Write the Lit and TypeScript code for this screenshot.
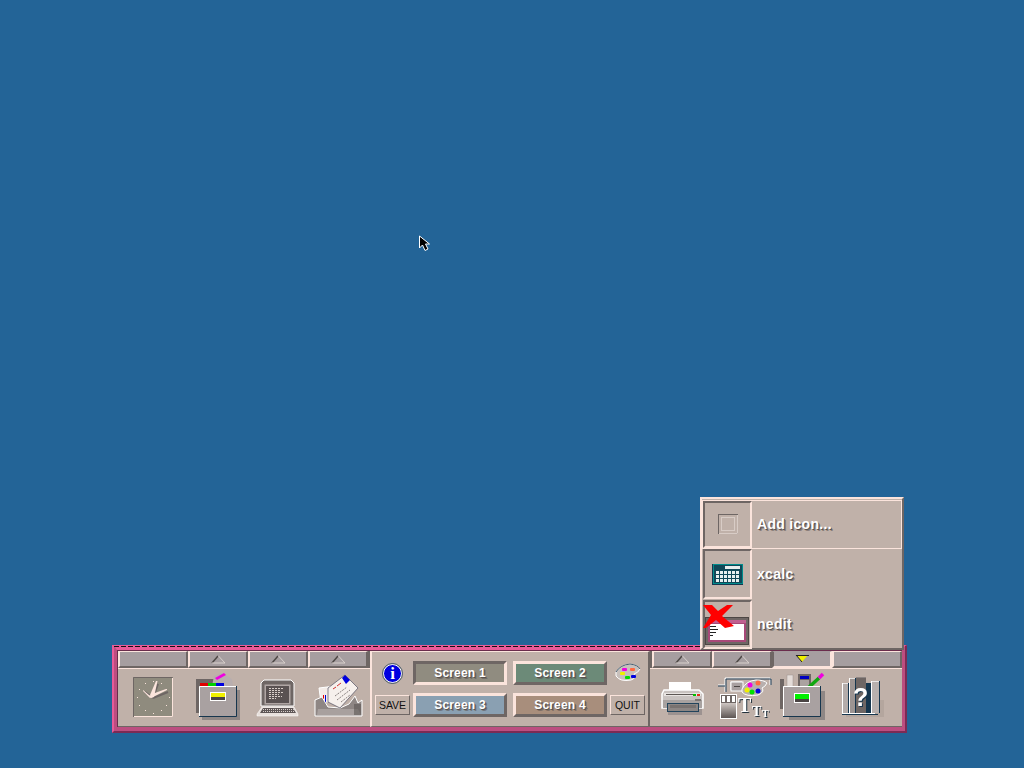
import { LitElement, html, css, svg } from 'lit';
import { customElement } from 'lit/decorators.js';

const LIGHT = '#fbe4dc';
const DARK = '#6e6664';
const OUT = '#16364e';

// viewBox is given in page coordinates, so the shapes below read like the screenshot
const pic = (x: number, y: number, w: number, h: number, body: unknown) => html`
  <svg width=${w} height=${h} viewBox="${x} ${y} ${w} ${h}" style="overflow:visible;display:block">${body}</svg>
`;

const dots = Array.from({ length: 12 }, (_, i) => {
  const a = (i * Math.PI) / 6;
  return svg`<rect x=${Math.round(152.5 + 16 * Math.sin(a))} y=${Math.round(696.5 - 16 * Math.cos(a))} width="1" height="1" fill=${LIGHT} />`;
});

const clock = svg`
  <rect x="133" y="677" width="40" height="40" fill="#8f8b7e" />
  <path d="M133.500 717V677.500H172.500" fill="none" stroke=${DARK} />
  <path d="M134 716.500H172.500V678" fill="none" stroke=${LIGHT} />
  ${dots}
  <path d="M153 698L158 684M153 698L145 692M153 698L168 692" stroke="#6e6664" stroke-width="2" />
  <polygon points="150,695 156,681 157.500,681 154,697 151,698" fill=${LIGHT} />
  <polygon points="149,695 143,690 143,691 150,698 153,697" fill=${LIGHT} />
  <polygon points="152,694 166,689 167,690 153,697" fill=${LIGHT} />
`;

const cabinet = svg`
  <rect x="202" y="690" width="38" height="30" fill="#8f8785" />
  <rect x="196" y="679" width="36" height="34" fill=${DARK} />
  <polygon points="214,676 222,673 232,679 233,686 212,686" fill="#b8aeae" />
  <polygon points="215,678 224,673 226,675 217,680" fill="#f000e0" />
  <rect x="200" y="683" width="8" height="3" fill="#e00000" />
  <rect x="208" y="683" width="8" height="3" fill="#00d000" />
  <rect x="216" y="683" width="8" height="3" fill="#0000e0" />
  <rect x="199" y="686" width="37" height="30" fill="#a9a1a1" />
  <path d="M199.500 716V686.500H236" fill="none" stroke="#fff" />
  <path d="M199 716.500H236.500V686" fill="none" stroke=${OUT} />
  <rect x="210" y="692" width="16" height="9" fill="#fff" />
  <rect x="211" y="693" width="14" height="4" fill="#f0f000" />
  <rect x="211" y="697" width="14" height="3" fill="#4a4444" />
`;

const computer = svg`
  <path d="M261 683L264 680H291L294 683V706H261Z" fill="#6e6664" stroke="#fff" />
  <rect x="264.500" y="684.500" width="26" height="20" fill="#b0a6a4" />
  <rect x="266" y="686" width="23" height="17" fill="#5a5252" />
  ${[688, 690, 692, 694, 696, 698].map(
    (y, i) => svg`<path d="M269 ${y}.5h${[14, 12, 15, 10, 13, 7][i]}" stroke="#d8cec9" stroke-dasharray="2 1" />`,
  )}
  <polygon points="262,707 294,707 298,714 298,716 257,716 257,714" fill="#e8e0dc" stroke="#fff" stroke-width=".5" />
  <polygon points="263,708 293,708 296,713 260,713" fill="#5e5656" />
  ${[709, 711].map((y) => svg`<path d="M263 ${y}.5H294" stroke="#d8d0cc" stroke-dasharray="1 1" />`)}
`;

const mail = svg`
  <polygon points="319,688 335,686 336,700 321,703" fill="#f4ece8" stroke="#fff" />
  <rect x="323" y="695" width="1" height="8" fill="#e00000" />
  <rect x="325" y="695" width="1" height="8" fill="#0000d0" />
  <polygon points="315,700 322,697 328,707 340,708 349,704 355,696 358,703 362,700 362,716 315,716" fill="#8e8684" stroke="#fff" />
  <polygon points="318,709 358,709 361,715 317,715" fill="#a8a09e" />
  <rect x="354" y="704" width="7" height="11" fill="#5c5654" opacity=".6" />
  <polygon points="328,688 345,675 358,688 340,708 328,702" fill="#f6f0ec" stroke="#3c3c50" stroke-width=".6" />
  <polygon points="342,678 345,675 350,680 346,684" fill="#0000e0" />
  <path d="M337 686L341 683M333 689L336 687" stroke="#d03030" />
  <path d="M335 696L347 687M337 700L350 690M341 702L350 695" stroke="#8a8280" stroke-dasharray="2 1" />
`;

const printer = svg`
  <rect x="669" y="682" width="22" height="9" fill="#fff" />
  <rect x="668" y="706" width="34" height="9" fill="#9c9290" />
  <path d="M664 690H699L703 694V708H662V694Z" fill="#c8c2c0" stroke="#fff" stroke-width="1.500" />
  <rect x="664" y="693" width="37" height="3" fill="#e8e4e2" />
  <rect x="666" y="694" width="27" height="1" fill="#5c5654" />
  <rect x="693" y="694" width="3" height="2" fill="#00c000" />
  <rect x="697" y="694" width="3" height="2" fill="#e03020" />
  <rect x="663" y="700" width="39" height="8" fill="#a8a2a0" />
  <rect x="695" y="699" width="6" height="2" fill="#7c7674" />
  <rect x="667.500" y="703.500" width="31" height="8" fill="#8c8684" stroke="#22445c" />
  <rect x="670" y="705" width="26" height="3" fill="#787270" />
`;

const styleTool = svg`
  <path d="M725 692V678H770V685M718 685H725M731 690V682H742" fill="none" stroke="#fff" />
  <path d="M726 692V679H771V685M718 686H725" fill="none" stroke="#20405a" />
  <rect x="731" y="682" width="12" height="9" fill="#a8a0a0" stroke="#fff" />
  <rect x="734" y="686" width="6" height="1" fill="#4c4644" />
  <rect x="720.500" y="694.500" width="16" height="24" fill="url(#fade)" stroke="#fff" />
  <rect x="721" y="695" width="15" height="8" fill="#6e6664" />
  <rect x="722" y="696" width="3" height="6" fill="#fff" />
  <rect x="727" y="696" width="3" height="6" fill="#fff" />
  <rect x="732" y="696" width="3" height="6" fill="#fff" />
  <path d="M742 689Q746 681 756 680Q764 680 767 683Q765 687 762 688Q765 692 758 695Q746 697 742 692Z" fill="#b8b0ae" stroke="#fff" />
  <circle cx="750" cy="685" r="2.500" fill="#f000e0" />
  <circle cx="758" cy="683" r="2.500" fill="#ff6a40" />
  <circle cx="747" cy="690" r="2.500" fill="#f0f000" />
  <circle cx="752" cy="692" r="2.500" fill="#00e000" />
  <circle cx="758" cy="691" r="2.500" fill="#0000e0" />
  <g font-family="'Liberation Serif', serif" font-weight="700" fill="#fff" style="filter:drop-shadow(1px 1px 0 #20303c)">
    <text x="738" y="712" font-size="20">T</text>
    <text x="752" y="716" font-size="14">T</text>
    <text x="762" y="717" font-size="10">T</text>
  </g>
`;

const apps = svg`
  <rect x="789" y="691" width="36" height="29" fill="#8f8785" />
  <rect x="780" y="679" width="4" height="30" fill=${DARK} />
  <rect x="787" y="675" width="6" height="13" fill="#e4dcd8" stroke="#9a9290" stroke-width=".5" />
  <rect x="798" y="674" width="13" height="14" fill="#6e6664" />
  <rect x="800" y="676" width="9" height="3" fill="#0000c0" />
  <rect x="800" y="680" width="9" height="6" fill="#aaa2a0" />
  <path d="M808 688L819 678" stroke="#10a810" stroke-width="3.500" />
  <path d="M819 678L823 674" stroke="#f000e0" stroke-width="3.500" />
  <rect x="783" y="686" width="37" height="30" fill="#a9a1a1" />
  <path d="M783.500 716V686.500H820" fill="none" stroke="#fff" />
  <path d="M783 716.500H820.500V686" fill="none" stroke=${OUT} />
  <rect x="794" y="693" width="16" height="10" fill="#fff" />
  <rect x="795" y="694" width="14" height="5" fill="#00f000" />
  <rect x="795" y="699" width="14" height="3" fill="#4a4444" />
`;

const book = (x: number, y: number, w: number, fill: string) => svg`
  <rect x=${x} y=${y} width=${w} height=${713 - y} fill=${fill} />
  <rect x=${x} y=${y} width="1" height=${713 - y} fill="#fff" />
  <rect x=${x} y=${y} width=${w} height="1" fill="#fff" opacity=".7" />
  <rect x=${x + w - 1} y=${y} width="1" height=${713 - y} fill=${OUT} />
`;

const books = svg`
  <rect x="846" y="700" width="38" height="17" fill="#a89c94" opacity=".5" />
  ${book(842, 683, 7, '#b4acaa')}
  ${book(849, 678, 7, '#9c9492')}
  <rect x="856" y="677" width="10" height="36" fill="#6e6664" />
  <rect x="856" y="677" width="10" height="1" fill="#8e8684" />
  <rect x="866" y="683" width="5" height="30" fill=${OUT} />
  ${book(871, 681, 9, '#b8b0ae')}
  <rect x="842" y="713" width="33" height="1" fill="#fff" />
  <rect x="842" y="714" width="36" height="1" fill=${OUT} />
  <text x="853" y="706" font-family="'Liberation Sans', sans-serif" font-weight="700" font-size="25" fill="#fff" style="filter:drop-shadow(1px 1px 0 #16364e)">?</text>
`;

const info = svg`
  <circle cx="392.500" cy="673.500" r="9" fill="#0000e0" stroke="#fff" />
  <circle cx="392.500" cy="673.500" r="10" fill="none" stroke=${OUT} stroke-width=".7" />
  <text x="392.500" y="679" text-anchor="middle" font-family="'Liberation Serif', serif" font-weight="700" font-size="17" fill="#fff">i</text>
`;

const palette = svg`
  <path d="M616 672Q620 665 630 664Q638 665 640 669Q638 673 634 674Q637 678 631 680Q620 682 616 676Z" fill="#c8c0bc" stroke="#fff" />
  <path d="M616 672Q620 665 630 664Q638 665 640 669" fill="none" stroke=${OUT} stroke-width=".8" />
  <rect x="622" y="668" width="5" height="3" rx="1" fill="#f000e0" />
  <rect x="630" y="668" width="5" height="3" rx="1" fill="#ff6a40" />
  <rect x="620" y="672" width="5" height="3" rx="1" fill="#f0f000" />
  <rect x="625" y="676" width="5" height="3" rx="1" fill="#00e000" />
  <rect x="631" y="675" width="5" height="3" rx="1" fill="#0000e0" />
`;

const addIcon = svg`
  <rect x="718.500" y="514.500" width="19" height="19" fill="none" stroke=${DARK} />
  <path d="M737.500 515V533.500H719" fill="none" stroke="#d8ccc6" />
  <rect x="721.500" y="517.500" width="13" height="13" fill="none" stroke="#d8ccc6" />
`;

const calc = svg`
  <rect x="712" y="564" width="31" height="21" fill=${OUT} />
  <rect x="713" y="564" width="30" height="20" fill="#008c8c" />
  <rect x="714" y="565" width="28" height="18" fill="#104858" />
  <rect x="725" y="566" width="15" height="3" fill="#e8f0f0" />
  ${[571, 575, 579].map((y) =>
    [716, 720, 724, 728, 732, 736].map(
      (x) => svg`<rect x=${x} y=${y} width="3" height="3" fill="#e8f0f0" />`,
    ),
  )}
`;

const nedit = svg`
  <rect x="705.500" y="617.500" width="43" height="27" fill=${DARK} stroke="#4c4644" />
  <rect x="708" y="620" width="38" height="22" fill="#a84878" />
  <rect x="708" y="620" width="38" height="3" fill="#c06090" />
  <rect x="710" y="624" width="34" height="16" fill="#fff" />
  <path d="M710 626.500H716M710 629.500H718M710 632.500H716M710 635.500H713" stroke="#222" />
  <polygon points="703,605 712,605 718,611 727,605 733,605 722,616 734,626 725,628 716,620 706,628 703,628 711,615" fill="#ff0000" />
`;

const cursor = svg`
  <polygon points="419.500,236 419.500,248 422.500,245 425,250.500 428,249 425.500,244 429.500,244" fill="#000" stroke="#fff" />
`;

@customElement('app-root')
export class AppRoot extends LitElement {
  static styles = css`
    :host {
      --light: #fbe4dc;
      --dark: #6e6664;
      --face: #c0b1a9;
      display: block;
      width: 1024px;
      height: 768px;
      position: relative;
      overflow: hidden;
      background: #236497;
      font-family: 'Liberation Sans', Arial, sans-serif;
    }

    .page {
      height: 768px;
      box-sizing: border-box;
      padding: 645px 117px 35px 112px;
    }

    .dock {
      position: relative;
      box-sizing: border-box;
      width: 795px;
      height: 88px;
      border-style: solid;
      border-width: 1px 2px 2px 2px;
      border-color: #e85a98 #7c2a54 #7c2a54 #e85a98;
    }

    .dock::before {
      content: '';
      position: absolute;
      left: 0;
      right: 0;
      top: 0;
      height: 1px;
      background: repeating-linear-gradient(90deg, #111 0 5px, transparent 5px 7px);
    }

    .rim {
      height: 100%;
      box-sizing: border-box;
      border-style: solid;
      border-width: 4px 3px 4px 3px;
      border-color: #e85a98 #bc4e80 #bc4e80 #bc4e80;
    }

    .panel {
      height: 100%;
      box-sizing: border-box;
      display: flex;
      border-top: 1px solid #6a2c4c;
      border-left: 1px solid #6a2c4c;
      background: var(--face);
    }

    .side {
      width: 252px;
      display: grid;
      grid-template-rows: 17px 1fr;
    }
    .side.left {
      grid-template-columns: 70px 60px 60px 60px 2px;
    }
    .side.right {
      grid-template-columns: 2px 60px 60px 60px 70px;
    }

    .tab {
      box-sizing: border-box;
      background: #a69ea0;
      border-style: solid;
      border-width: 1px 2px 2px 2px;
      border-color: var(--light) var(--dark) var(--dark) var(--light);
      display: flex;
      justify-content: center;
      align-items: center;
    }
    .tab.open {
      border-color: #a69ea0 var(--light) var(--light) var(--dark);
    }
    .filler {
      background: var(--dark);
    }

    .cell {
      border-top: 1px solid var(--light);
      border-bottom: 1px solid var(--dark);
    }

    .center {
      flex: 1;
      box-sizing: border-box;
      border-left: 2px solid var(--light);
      border-right: 2px solid var(--dark);
      border-top: 1px solid var(--light);
      border-bottom: 1px solid var(--dark);
      padding: 9px 3px 0;
      display: grid;
      grid-template-columns: 35px 94px 97px 35px;
      grid-template-rows: 24px 24px;
      column-gap: 3px;
      row-gap: 8px;
      align-content: start;
    }

    .screen {
      box-sizing: border-box;
      border: 3px solid;
      border-color: var(--light) var(--dark) var(--dark) var(--light);
      display: flex;
      align-items: center;
      justify-content: center;
      color: #fff;
      font-weight: 700;
      font-size: 12px;
      letter-spacing: 0.2px;
      text-shadow: 1px 1px 0 #5a5250, 2px 2px 0 #5a525088;
    }
    .screen.on {
      border-color: var(--dark) var(--light) var(--light) var(--dark);
    }
    .screen.second {
      margin-left: 3px;
    }
    .s1 { background: #908c80; }
    .s2 { background: #6c8a78; }
    .s3 { background: #8aa0b2; }
    .s4 { background: #a88e7c; }

    .small {
      align-self: center;
      box-sizing: border-box;
      height: 20px;
      border: 1px solid;
      border-color: var(--light) var(--dark) var(--dark) var(--light);
      display: flex;
      align-items: center;
      justify-content: center;
      font-size: 10.500px;
      color: #111;
    }

    .menu {
      position: absolute;
      left: 586px;
      top: -149px;
      width: 204px;
      height: 153px;
      box-sizing: border-box;
      border-style: solid;
      border-width: 2px;
      border-color: var(--light) var(--dark) var(--dark) var(--light);
      background: var(--face);
      padding: 2px 0 0 1px;
      display: flex;
      flex-direction: column;
      gap: 1px;
    }

    .row {
      display: flex;
      align-items: stretch;
      height: 50px;
    }
    .row.add {
      height: 47px;
      width: 198px;
      box-shadow: 0 0 0 1px var(--light);
    }
    .row.last {
      height: 49px;
    }

    .slot {
      box-sizing: border-box;
      width: 49px;
      border: 2px solid;
      border-color: var(--dark) var(--light) var(--light) var(--dark);
    }

    .name {
      margin-left: 5px;
      align-self: center;
      color: #fff;
      font-weight: 700;
      font-size: 14px;
      letter-spacing: 0.3px;
      text-shadow: 1px 1px 0 #5a5250, 2px 2px 0 #5a525088;
    }
    .row.add .name,
    .row.last .name {
      margin-bottom: 2px;
    }

    .cursor {
      position: absolute;
      left: 0;
      top: 0;
      pointer-events: none;
    }
    .defs {
      position: absolute;
    }
  `;

  private tab(open = false, arrow = true) {
    if (!arrow) return html`<div class="tab"></div>`;
    return html`<div class="tab ${open ? 'open' : ''}">
      <svg width="15" height="9" viewBox="0 0 15 9">
        ${open
          ? svg`<polygon points="1,0 13,0 7,7" fill="#f0f000" /><path d="M1 .5H14M1 0L7 7" stroke="#222" fill="none" />`
          : svg`<path d="M1 8L7 1" stroke="#4e4846" stroke-width="1.500" fill="none" /><path d="M7.500 1L14 8H1" stroke="#d8d0cc" fill="none" />`}
      </svg>
    </div>`;
  }

  render() {
    return html`
      <div class="page">
        <div class="dock">
          <div class="rim">
            <div class="panel">
              <div class="side left">
                ${this.tab(false, false)}${this.tab()}${this.tab()}${this.tab()}
                <div class="filler"></div>
                <div class="cell">${pic(118, 669, 70, 57, clock)}</div>
                <div class="cell">${pic(188, 669, 60, 57, cabinet)}</div>
                <div class="cell">${pic(248, 669, 60, 57, computer)}</div>
                <div class="cell">${pic(308, 669, 60, 57, mail)}</div>
                <div class="cell"></div>
              </div>

              <div class="center">
                <div>${pic(375, 661, 35, 24, info)}</div>
                <div class="screen on s1">Screen 1</div>
                <div class="screen second s2">Screen 2</div>
                <div>${pic(610, 661, 35, 24, palette)}</div>
                <div class="small">SAVE</div>
                <div class="screen s3">Screen 3</div>
                <div class="screen second s4">Screen 4</div>
                <div class="small">QUIT</div>
              </div>

              <div class="side right">
                <div class="filler"></div>
                ${this.tab()}${this.tab()}${this.tab(true)}${this.tab(false, false)}
                <div class="cell"></div>
                <div class="cell">${pic(652, 669, 60, 57, printer)}</div>
                <div class="cell">${pic(712, 669, 60, 57, styleTool)}</div>
                <div class="cell">${pic(772, 669, 60, 57, apps)}</div>
                <div class="cell">${pic(832, 669, 70, 57, books)}</div>
              </div>
            </div>
          </div>

          <div class="menu">
            <div class="row add">
              <div class="slot">${pic(705, 503, 45, 43, addIcon)}</div>
              <div class="name">Add icon...</div>
            </div>
            <div class="row">
              <div class="slot">${pic(705, 551, 45, 46, calc)}</div>
              <div class="name">xcalc</div>
            </div>
            <div class="row last">
              <div class="slot">${pic(705, 602, 45, 45, nedit)}</div>
              <div class="name">nedit</div>
            </div>
          </div>
        </div>
      </div>
      <svg class="cursor" width="1024" height="768" viewBox="0 0 1024 768">${cursor}</svg>
      <svg class="defs" width="0" height="0">
        <defs>
          <linearGradient id="fade" x1="0" y1="0" x2="0" y2="1">
            <stop offset="0.3" stop-color="#d8d0cc" />
            <stop offset="1" stop-color="#5a5250" />
          </linearGradient>
        </defs>
      </svg>
    `;
  }
}
